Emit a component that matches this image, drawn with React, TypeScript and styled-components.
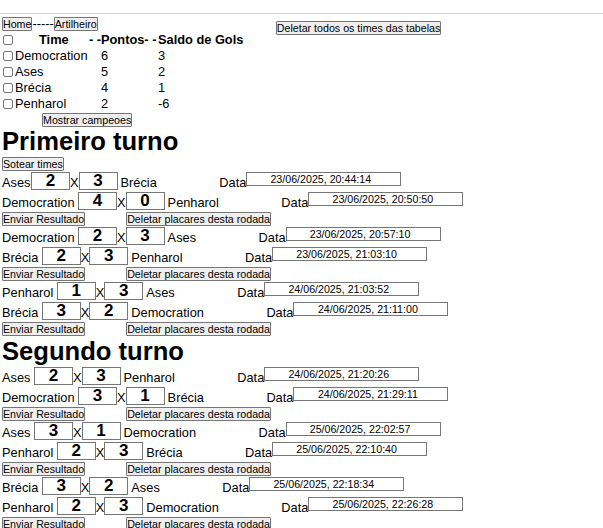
import React from "react";
import styled, { createGlobalStyle } from "styled-components";

const Global = createGlobalStyle`
  html, body { margin: 0; padding: 0; background: #fff; }
  body {
    padding-left: 2px;
    font-family: "Liberation Sans", Arial, sans-serif;
    font-size: 12.8px;
    color: #000;
  }
`;

const TopStrip = styled.div`
  height: 13px;
  margin-left: -2px;
  border-bottom: 1px solid #d3d3d3;
`;

const Header = styled.div`
  display: flex;
  align-items: flex-start;
  box-sizing: border-box;
  height: 18px;
  padding-top: 3px;
`;

const Btn = styled.button<{ $ml?: number; $mt?: number }>`
  font-family: "Liberation Sans", Arial, sans-serif;
  font-size: 10.67px;
  line-height: 12px;
  height: 14px;
  padding: 0;
  margin: ${(p) => p.$mt ?? 0}px 0 0 ${(p) => p.$ml ?? 0}px;
  border: 1px solid #767676;
  border-radius: 1px;
  background: #efefef;
  color: #000;
  white-space: nowrap;
  display: block;
  box-sizing: border-box;
`;

const Dashes = styled.span`
  line-height: 14px;
  white-space: pre;
`;

const Table = styled.div`
  display: grid;
  grid-template-columns: 99px 57px auto;
  grid-auto-rows: 16px;
  align-items: center;
`;

const Cell = styled.div<{ $bold?: boolean }>`
  display: flex;
  align-items: center;
  font-weight: ${(p) => (p.$bold ? 700 : 400)};
  white-space: pre;
  line-height: 16px;
`;

const Check = styled.input.attrs({ type: "checkbox" })`
  appearance: none;
  width: 10px;
  height: 10px;
  margin: 0 2px 0 1px;
  border: 1px solid #767676;
  border-radius: 2px;
  background: #fff;
  box-sizing: border-box;
`;

const TimeHead = styled.span`
  margin-left: 24px;
`;

const Push = styled.span`
  margin-left: auto;
`;

const Title = styled.h1<{ $mt?: number }>`
  margin: ${(p) => p.$mt ?? 0}px 0 0;
  font-size: 25.6px;
  line-height: 29px;
  font-weight: 700;
`;

const Row = styled.div`
  display: flex;
  align-items: flex-start;
  height: 20px;
  white-space: nowrap;
`;

const Label = styled.span<{ $ml?: number }>`
  display: block;
  padding-top: 3px;
  line-height: 18px;
  margin-left: ${(p) => p.$ml ?? 0}px;
`;

const Score = styled.div<{ $ml?: number }>`
  box-sizing: border-box;
  width: 39px;
  height: 18px;
  margin: 1px 0 0 ${(p) => p.$ml ?? 0}px;
  border: 1px solid #767676;
  font-size: 17px;
  font-weight: 700;
  line-height: 16px;
  text-align: center;
`;

const DateBox = styled.div`
  box-sizing: border-box;
  width: 155px;
  height: 14px;
  margin-top: 1px;
  padding-right: 6px;
  border: 1px solid #767676;
  font-size: 10.67px;
  line-height: 12px;
  text-align: center;
`;

const ButtonRow = styled.div`
  display: flex;
  align-items: flex-start;
  height: 15px;
`;

type Match = { home: string; hs: number; as: number; away: string; date: string; tight?: boolean };

const MatchRow = ({ m }: { m: Match }) => (
  <Row>
    <Label>{m.home}</Label>
    <Score $ml={m.tight ? 0.5 : 3.5}>{m.hs}</Score>
    <Label>X</Label>
    <Score>{m.as}</Score>
    <Label $ml={3}>{m.away}</Label>
    <Label $ml={62.5}>Data</Label>
    <DateBox>{m.date}</DateBox>
  </Row>
);

const Round = ({ games }: { games: Match[] }) => (
  <>
    {games.map((g, i) => (
      <MatchRow key={i} m={g} />
    ))}
    <ButtonRow>
      <Btn $mt={1}>Enviar Resultado</Btn>
      <Btn $mt={1} $ml={41}>Deletar placares desta rodada</Btn>
    </ButtonRow>
  </>
);

const standings = [
  { t: "Democration", p: 6, s: 3 },
  { t: "Ases", p: 5, s: 2 },
  { t: "Brécia", p: 4, s: 1 },
  { t: "Penharol", p: 2, s: -6 },
];

const turno1: Match[][] = [
  [
    { home: "Ases", hs: 2, as: 3, away: "Brécia", date: "23/06/2025, 20:44:14", tight: true },
    { home: "Democration", hs: 4, as: 0, away: "Penharol", date: "23/06/2025, 20:50:50" },
  ],
  [
    { home: "Democration", hs: 2, as: 3, away: "Ases", date: "23/06/2025, 20:57:10" },
    { home: "Brécia", hs: 2, as: 3, away: "Penharol", date: "23/06/2025, 21:03:10" },
  ],
  [
    { home: "Penharol", hs: 1, as: 3, away: "Ases", date: "24/06/2025, 21:03:52" },
    { home: "Brécia", hs: 3, as: 2, away: "Democration", date: "24/06/2025, 21:11:00" },
  ],
];

const turno2: Match[][] = [
  [
    { home: "Ases", hs: 2, as: 3, away: "Penharol", date: "24/06/2025, 21:20:26" },
    { home: "Democration", hs: 3, as: 1, away: "Brécia", date: "24/06/2025, 21:29:11" },
  ],
  [
    { home: "Ases", hs: 3, as: 1, away: "Democration", date: "25/06/2025, 22:02:57" },
    { home: "Penharol", hs: 2, as: 3, away: "Brécia", date: "25/06/2025, 22:10:40" },
  ],
  [
    { home: "Brécia", hs: 3, as: 2, away: "Ases", date: "25/06/2025, 22:18:34" },
    { home: "Penharol", hs: 2, as: 3, away: "Democration", date: "25/06/2025, 22:26:28" },
  ],
];

export default function App() {
  return (
    <>
      <Global />
      <TopStrip />
      <Header>
        <Btn>Home</Btn>
        <Dashes>-----</Dashes>
        <Btn>Artilheiro</Btn>
        <Btn $ml={178} $mt={4}>Deletar todos os times das tabelas</Btn>
      </Header>
      <Table>
        <Cell $bold>
          <Check />
          <TimeHead>Time</TimeHead>
          <Push>- -</Push>
        </Cell>
        <Cell $bold>Pontos- -</Cell>
        <Cell $bold>Saldo de Gols</Cell>
        {standings.map((r) => (
          <React.Fragment key={r.t}>
            <Cell>
              <Check />
              {r.t}
            </Cell>
            <Cell>{r.p}</Cell>
            <Cell>{r.s}</Cell>
          </React.Fragment>
        ))}
      </Table>
      <Btn $ml={40} $mt={1}>Mostrar campeoes</Btn>
      <Title>Primeiro turno</Title>
      <Btn $mt={1}>Sotear times</Btn>
      {turno1.map((g, i) => (
        <Round key={i} games={g} />
      ))}
      <Title $mt={1}>Segundo turno</Title>
      {turno2.map((g, i) => (
        <Round key={i} games={g} />
      ))}
    </>
  );
}
